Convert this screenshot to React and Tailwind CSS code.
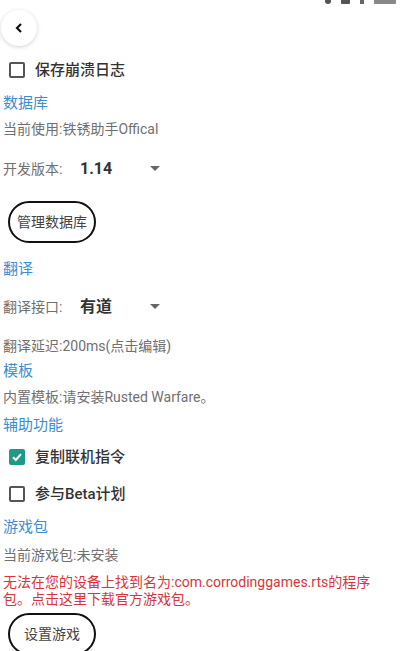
import React from 'react';

const FONT = { fontFamily: 'Roboto, "Noto Sans CJK SC", sans-serif' };

// Checkbox row
const Check = ({ checked, label }) => (
  <div className="flex items-center h-[32px] pl-[9px]">
    {checked ? (
      <div className="w-[16px] h-[16px] rounded-[2px] bg-[#1f9a88] flex items-center justify-center">
        <svg width="12" height="12" viewBox="0 0 12 12">
          <path d="M2 6.2 L4.8 9 L10 3.2" fill="none" stroke="#fff" strokeWidth="2" />
        </svg>
      </div>
    ) : (
      <div className="w-[16px] h-[16px] rounded-[2px] border-2 border-[#555]" />
    )}
    <span className="ml-[10px] text-[15px] font-medium text-[#333]">{label}</span>
  </div>
);

const Heading = ({ children, className = '' }) => (
  <div className={`h-[22px] flex items-center text-[15px] text-[#3b8ed4] ${className}`}>{children}</div>
);

const Info = ({ children, className = '' }) => (
  <div className={`h-[20px] flex items-center text-[14px] text-[#707070] ${className}`}>{children}</div>
);

const Select = ({ label, value, className = '' }) => (
  <div className={`h-[40px] flex items-center ${className}`}>
    <span className="w-[77px] text-[14px] text-[#707070]">{label}</span>
    <span className="w-[70px] text-[16px] font-bold text-[#333]">{value}</span>
    <svg width="10" height="6" viewBox="0 0 10 6">
      <path d="M0 0 L10 0 L5 5 Z" fill="#666" />
    </svg>
  </div>
);

const OvalButton = ({ children, className = '' }) => (
  <div
    className={`w-[88px] h-[42px] ml-[5px] rounded-full border-[2.5px] border-[#111] flex items-center justify-center text-[14px] text-[#444] ${className}`}
  >
    {children}
  </div>
);

export default function App() {
  return (
    <div className="relative w-[400px] h-[651px] overflow-hidden bg-white px-[3px]" style={FONT}>
      {/* status bar icons, cut off at the top */}
      <div className="absolute top-[-3px] right-[4px] flex items-center gap-[10px]">
        <div className="w-[6px] h-[7px] rounded-full bg-[#555]" />
        <div className="w-[9px] h-[7px] bg-[#555] rounded-[1px]" />
        <div className="w-[4px] h-[6px] bg-[#666]" />
        <div className="w-[22px] h-[6px] bg-[#888] rounded-[1px]" />
      </div>

      {/* back button */}
      <div className="pt-[10px]">
        <div className="w-[36px] h-[36px] -ml-[2px] rounded-full bg-white shadow-[0_1px_4px_rgba(0,0,0,0.18)] flex items-center justify-center">
          <svg width="8" height="10" viewBox="0 0 8 10">
            <path d="M6 1 L2 5 L6 9" fill="none" stroke="#111" strokeWidth="2.2" />
          </svg>
        </div>
      </div>

      <div className="mt-[8px] -ml-[3px]">
        <Check label="保存崩溃日志" />
      </div>

      <Heading className="mt-[6px]">数据库</Heading>
      <Info className="mt-[5px]">当前使用:铁锈助手Offical</Info>
      <Select label="开发版本:" value="1.14" className="mt-[10px]" />
      <OvalButton className="mt-[12px]">管理数据库</OvalButton>

      <Heading className="mt-[15px]">翻译</Heading>
      <Select label="翻译接口:" value="有道" className="mt-[7px]" />
      <Info className="mt-[9px]">翻译延迟:200ms(点击编辑)</Info>

      <Heading className="mt-[4px]">模板</Heading>
      <Info className="mt-[5px]">内置模板:请安装Rusted Warfare。</Info>

      <Heading className="mt-[7px]">辅助功能</Heading>
      <div className="-ml-[3px]">
        <div className="mt-[5px]">
          <Check checked label="复制联机指令" />
        </div>
        <div className="mt-[5px]">
          <Check label="参与Beta计划" />
        </div>
      </div>

      <Heading className="mt-[6px]">游戏包</Heading>
      <Info className="mt-[7px]">当前游戏包:未安装</Info>
      <p className="mt-[9px] text-[14px] leading-[17px] text-[#d7353b]">
        无法在您的设备上找到名为:com.corrodinggames.rts的程序包。点击这里下载官方游戏包。
      </p>
      <OvalButton className="mt-[5px]">设置游戏</OvalButton>
    </div>
  );
}
